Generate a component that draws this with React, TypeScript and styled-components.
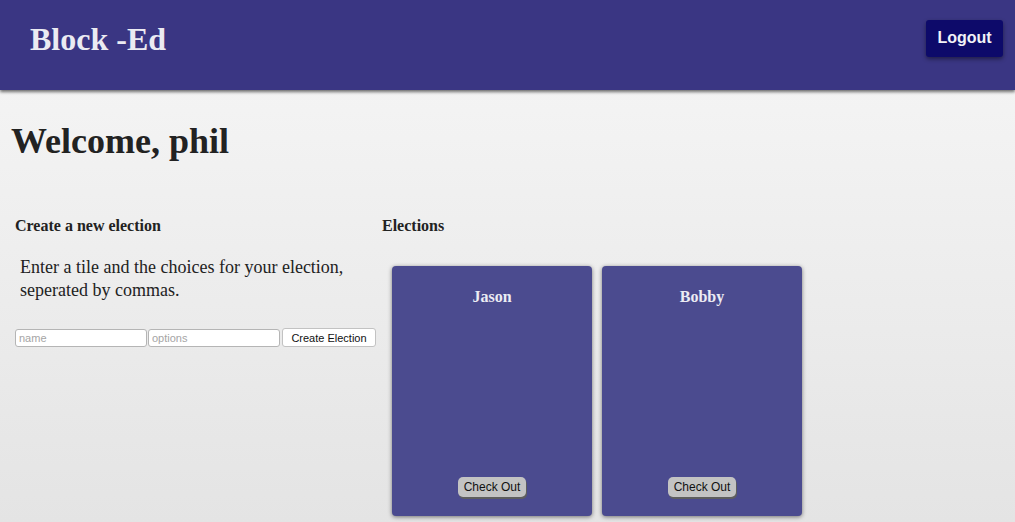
import { createGlobalStyle, styled } from "styled-components"

const GlobalStyle = createGlobalStyle`
    html, body {
        margin: 0;
        padding: 0;
    }

    body {
        min-height: 100vh;
        background: linear-gradient(#f7f7f7, #e4e4e4);
        font-family: "Liberation Serif", "Times New Roman", serif;
        color: #222;
    }
`

const Page = styled.div`
    min-height: 100vh;
`

const TopBar = styled.header`
    height: 90px;
    background: #3a3683;
    box-shadow: 0 2px 3px rgba(0, 0, 0, 0.55);
    display: flex;
    align-items: center;
    justify-content: space-between;
    padding: 0 12px 0 30px;
    box-sizing: border-box;
`

const Brand = styled.h1`
    margin: 0 0 12px 0;
    font-size: 32px;
    line-height: 1;
    font-weight: bold;
    color: #ebebf2;
`

const LogoutButton = styled.button`
    width: 77px;
    height: 37px;
    margin-bottom: 14px;
    border: none;
    border-radius: 3px;
    background: #0d0a6a;
    color: #f2f2f7;
    font-family: "Liberation Sans", Arial, sans-serif;
    font-weight: bold;
    font-size: 16px;
    box-shadow: 0 2px 4px rgba(0, 0, 0, 0.45);
    cursor: pointer;
`

const Welcome = styled.h1`
    margin: 33px 0 0 11px;
    font-size: 36px;
    line-height: 1;
    font-weight: bold;
    color: #222;
`

const Content = styled.main`
    display: flex;
    margin-top: 59px;
`

const LeftColumn = styled.section`
    width: 382px;
    min-width: 0;
    flex-shrink: 0;
    padding-left: 15px;
    box-sizing: border-box;
`

const RightColumn = styled.section`
    flex: 1;
`

const SectionTitle = styled.h4`
    margin: 0;
    font-size: 16px;
    line-height: 1;
    font-weight: bold;
`

const Hint = styled.p`
    margin: 22px 0 0 5px;
    font-size: 18px;
    line-height: 23px;
`

const Form = styled.form`
    display: flex;
    align-items: center;
    margin-top: 26px;
`

const TextInput = styled.input`
    width: 132px;
    min-width: 0;
    flex-shrink: 0;
    height: 18px;
    box-sizing: border-box;
    margin: 0 1px 0 0;
    padding: 0 3px;
    border: 1px solid #b5b5b5;
    border-radius: 3px;
    background: #fff;
    font-family: "Liberation Sans", Arial, sans-serif;
    font-size: 11px;

    &::placeholder {
        color: #a5a5a5;
    }
`

const CreateButton = styled.button`
    width: 94px;
    flex-shrink: 0;
    height: 19px;
    margin-left: 1px;
    padding: 0;
    border: 1px solid #c2c2c2;
    border-radius: 3px;
    background: #fff;
    color: #111;
    font-family: "Liberation Sans", Arial, sans-serif;
    font-size: 11px;
`

const CardRow = styled.div`
    display: flex;
    gap: 10px;
    margin: 32px 0 0 10px;
`

const Card = styled.div`
    width: 200px;
    height: 250px;
    box-sizing: border-box;
    padding: 23px 0 19px;
    display: flex;
    flex-direction: column;
    align-items: center;
    justify-content: space-between;
    background: #4b4b8f;
    border-radius: 4px;
    box-shadow: 0 1px 4px rgba(0, 0, 0, 0.5);
`

const CardName = styled.h4`
    margin: 0;
    font-size: 16px;
    line-height: 1;
    font-weight: bold;
    color: #ececf3;
`

const CheckOutButton = styled.button`
    width: 68px;
    height: 20px;
    padding: 0;
    border: none;
    border-radius: 5px;
    background: #c3c3c3;
    color: #111;
    font-family: "Liberation Sans", Arial, sans-serif;
    font-size: 12px;
    box-shadow: 1px 2px 0 #5e5e5e;
`

const elections = ["Jason", "Bobby"]

const App = () => {

    return (

        <Page>
            <GlobalStyle />

            <TopBar>
                <Brand>Block -Ed</Brand>
                <LogoutButton>Logout</LogoutButton>
            </TopBar>

            <Welcome>Welcome, phil</Welcome>

            <Content>

                <LeftColumn>
                    <SectionTitle>Create a new election</SectionTitle>
                    <Hint>
                        Enter a tile and the choices for your election,
                        <br />
                        seperated by commas.
                    </Hint>
                    <Form onSubmit={(e) => e.preventDefault()}>
                        <TextInput placeholder="name" />
                        <TextInput placeholder="options" />
                        <CreateButton type="submit">Create Election</CreateButton>
                    </Form>
                </LeftColumn>

                <RightColumn>
                    <SectionTitle>Elections</SectionTitle>
                    <CardRow>
                        {elections.map((name) => (
                            <Card key={name}>
                                <CardName>{name}</CardName>
                                <CheckOutButton>Check Out</CheckOutButton>
                            </Card>
                        ))}
                    </CardRow>
                </RightColumn>

            </Content>

        </Page>

    )

}

export default App
